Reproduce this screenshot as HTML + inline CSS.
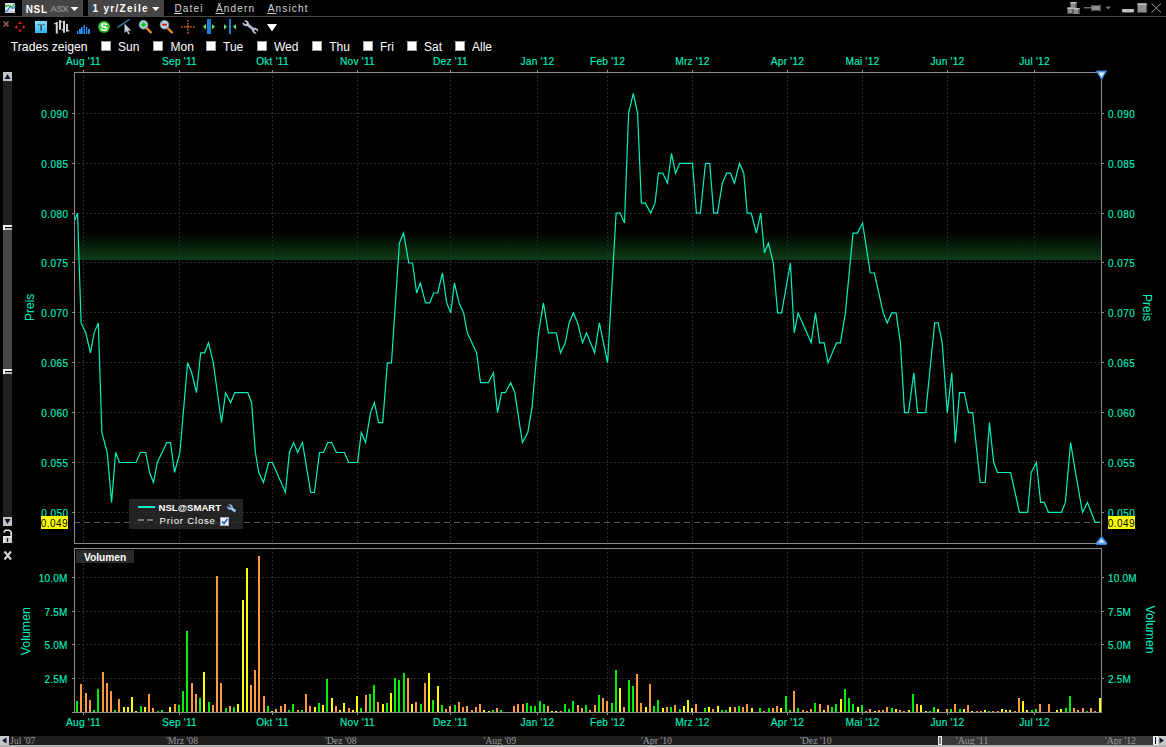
<!DOCTYPE html>
<html><head><meta charset="utf-8"><title>NSL Chart</title>
<style>
html,body{margin:0;padding:0;background:#000;}
body{width:1166px;height:747px;position:relative;overflow:hidden;font-family:"Liberation Sans",sans-serif;}
.a{position:absolute;}
svg text{font-family:"Liberation Sans",sans-serif;}
.tl{fill:#00f0c0;stroke:#00f0c0;stroke-width:0.12px;}
</style></head><body>

<svg class="a" style="left:0;top:0" width="1166" height="747">
<defs><linearGradient id="gb" x1="0" y1="0" x2="0" y2="1"><stop offset="0" stop-color="#000"/><stop offset="1" stop-color="#0f3d15"/></linearGradient>
<clipPath id="cp"><rect x="75" y="73" width="1026" height="470"/></clipPath></defs>
<rect x="0" y="16" width="1166" height="1" fill="#484848"/>
<rect x="22" y="0" width="61" height="16" fill="#454545"/>
<rect x="88" y="0" width="76" height="16" fill="#454545"/>
<text x="25.8" y="12.6" font-size="10" font-weight="bold" fill="#fff" letter-spacing="0.6">NSL</text>
<text x="50.2" y="12.3" font-size="9.4" font-weight="bold" fill="#8c8c8c" letter-spacing="-0.5">ASX</text>
<path d="M70.5 7H78.5L74.5 11z" fill="#fff"/>
<text x="92.5" y="12" font-size="10" font-weight="bold" fill="#fff" letter-spacing="1.3">1 yr/Zeile</text>
<path d="M152 7H159.5L155.75 11z" fill="#fff"/>
<text x="174.5" y="11.8" font-size="10" fill="#d6d6d6" letter-spacing="1.15">Datei</text>
<rect x="174.0" y="13" width="8" height="1" fill="#d6d6d6"/>
<text x="216" y="11.8" font-size="10" fill="#d6d6d6" letter-spacing="1.15">Ändern</text>
<rect x="215.5" y="13" width="9" height="1" fill="#d6d6d6"/>
<text x="267.8" y="11.8" font-size="10" fill="#d6d6d6" letter-spacing="1.15">Ansicht</text>
<rect x="267.3" y="13" width="9" height="1" fill="#d6d6d6"/>
<g transform="translate(5,3)"><rect x="0" y="0" width="10" height="10" fill="#dde2ee"/><rect x="0" y="8" width="10" height="2" fill="#c8ccd8"/>
<path d="M0 8.6 L2.5 7.6 L3.6 6 L4.6 4.5 L5.5 2.6" fill="none" stroke="#2a80e0" stroke-width="1.3"/><circle cx="7.6" cy="5.2" r="0.9" fill="#2a70d0"/><circle cx="9.6" cy="4.5" r="0.9" fill="#2a80e0"/><path d="M0 3.6 L2.5 2.4 L4 2.5 L5.5 4.3 L7.5 3.5 L10 0.3" fill="none" stroke="#22b22a" stroke-width="1.2"/></g>
<g transform="translate(1066,0)">
<g fill="#8a8a8a"><rect x="4.5" y="2" width="6" height="6"/><rect x="1.5" y="7.5" width="6" height="6"/><rect x="7.5" y="8" width="6" height="6"/></g>
<g fill="#c0c0c0"><rect x="4.5" y="2" width="6" height="1.5"/><rect x="1.5" y="7.5" width="6" height="1.5"/><rect x="7.5" y="8" width="6" height="1.5"/></g>
<g fill="#5e5e5e"><rect x="9" y="3.5" width="1.5" height="4.5"/><rect x="6" y="9" width="1.5" height="4.5"/><rect x="12" y="9.5" width="1.5" height="4.5"/></g>
<rect x="18" y="7" width="8" height="1.5" fill="#6a6a6a"/>
<path d="M25.5 4.5 L27 5.5 H33 L34.5 4.5 V11.5 L33 10.5 H27 L25.5 11.5 Z" fill="#8e8e8e"/>
<path d="M39.5 6.5 H45 L42.25 9.5 Z" fill="#7a7a7a"/>
<rect x="56" y="9" width="12" height="3.5" rx="0.8" fill="#bdbdbd"/>
<rect x="71.3" y="3.2" width="9.5" height="9.5" fill="#8e8e8e" stroke="#3c3c3c" stroke-width="0.6"/><rect x="71.6" y="3.5" width="9" height="1.3" fill="#d0d0d0"/>
<path d="M85.5 3.5 L95 12.5 M95 3.5 L85.5 12.5" stroke="#a8a8a8" stroke-width="0.9"/>
</g>
<g transform="translate(0,17)">
<path d="M3.5 4.5 L8.5 9.5 M8.5 4.5 L3.5 9.5" stroke="#8a4f48" stroke-width="1.8"/>
<g fill="#ff1a1a"><path d="M20 4.5 L22 7 H18 Z"/><path d="M20 15.3 L22 12.8 H18 Z"/><path d="M14.7 9.9 L17.2 7.9 V11.9 Z"/><path d="M25.3 9.9 L22.8 7.9 V11.9 Z"/></g>
<defs><linearGradient id="tg" x1="0" y1="0" x2="0" y2="1"><stop offset="0" stop-color="#86dcfb"/><stop offset="1" stop-color="#2fb6ee"/></linearGradient></defs>
<rect x="35" y="4" width="12" height="12" fill="url(#tg)"/>
<rect x="40.3" y="7" width="1.6" height="6.8" fill="#3a4a58"/><rect x="38" y="7" width="1.3" height="1.2" fill="#24405a"/><rect x="43" y="7" width="1.3" height="1.2" fill="#24405a"/><rect x="39.5" y="7" width="3.2" height="0.8" fill="#6f8fa4"/>
<g fill="#cfcfcf"><rect x="55.8" y="5" width="2" height="11.6"/><rect x="54.3" y="5.8" width="1.6" height="1.4"/>
<rect x="59" y="3.1" width="2" height="9.6"/><rect x="61" y="4.2" width="1.4" height="1.3"/>
<rect x="63" y="3.9" width="2" height="11.9"/><rect x="61.8" y="12" width="1.3" height="1.3"/>
<rect x="66" y="6.9" width="2" height="7.8"/><rect x="68" y="13" width="1.3" height="1.3"/></g>
<g fill="#1f8af0"><rect x="77" y="13.9" width="1.4" height="3.1"/><rect x="79" y="12" width="2" height="5"/><rect x="81" y="10" width="1.8" height="7"/><rect x="83.6" y="8.1" width="1.5" height="8.9"/><rect x="86" y="10" width="1.3" height="7"/><rect x="88" y="12" width="2" height="5"/></g>
<circle cx="104" cy="9.9" r="6" fill="#1fa51f"/><circle cx="104" cy="9.4" r="5.2" fill="#38cc38"/>
<text x="104" y="14" font-weight="bold" font-size="11" fill="#fff" text-anchor="middle">S</text>
<path d="M117.5 10.5 L129.5 2.2" stroke="#3a8fd0" stroke-width="1.1"/>
<path d="M124.5 6.5 V16 L126.5 14 L128.5 17.5 L129.8 16.8 L128 13.5 H131 Z" fill="#c8d0dc"/>
<path d="M146.5 11 L151.5 16" stroke="#f0902a" stroke-width="2.4"/><circle cx="143.5" cy="7.7" r="4.3" fill="#bcd6e6" stroke="#7896aa" stroke-width="1"/><path d="M141 7.7 H146 M143.5 5.2 V10.2" stroke="#19c019" stroke-width="2"/>
<path d="M167.5 11 L172.5 16" stroke="#f0902a" stroke-width="2.4"/><circle cx="164.5" cy="7.7" r="4.3" fill="#bcd6e6" stroke="#7896aa" stroke-width="1"/><path d="M162 7.7 H167" stroke="#e02020" stroke-width="2"/>
<g fill="#b8581a"><rect x="187" y="3" width="1.6" height="1.6"/><rect x="187" y="6" width="1.6" height="1.6"/><rect x="187" y="12" width="1.6" height="1.6"/><rect x="187" y="15" width="1.6" height="1.6"/>
<rect x="181" y="9" width="1.6" height="1.6"/><rect x="184" y="9" width="1.6" height="1.6"/><rect x="190" y="9" width="1.6" height="1.6"/><rect x="193" y="9" width="1.6" height="1.6"/><rect x="186.5" y="8.5" width="2.6" height="2.6"/></g>
<rect x="207" y="2" width="4" height="15" fill="#1a7fd0"/><path d="M206 7 L203 9.7 L206 12.5 Z M212 7 L215 9.7 L212 12.5 Z" fill="#5fe35f"/>
<rect x="229" y="2" width="2" height="15" fill="#1a7fd0"/><path d="M224 7 L227 9.7 L224 12.5 Z M236 7 L233 9.7 L236 12.5 Z" fill="#5fe35f"/>
<g transform="translate(250.5,10) rotate(38)"><rect x="-5" y="-1.4" width="10" height="2.8" fill="#aebacb"/><circle cx="-6" cy="0" r="2.9" fill="#c0cada"/><circle cx="6" cy="0" r="2.9" fill="#b4bfd0"/><rect x="-9.5" y="-1" width="4.3" height="2" fill="#000"/><rect x="5.2" y="-1" width="4.3" height="2" fill="#000"/></g>
<path d="M267 7 H277 L272 14.5 Z" fill="#fff"/>
</g>
<text x="10.8" y="51" font-size="12.2" fill="#fff">Trades zeigen</text>
<rect x="101.5" y="41.5" width="9" height="9" fill="#fff" stroke="#a0a0a0"/>
<text x="118" y="51" font-size="12" fill="#fff">Sun</text>
<rect x="153.5" y="41.5" width="9" height="9" fill="#fff" stroke="#a0a0a0"/>
<text x="170.5" y="51" font-size="12" fill="#fff">Mon</text>
<rect x="206.5" y="41.5" width="9" height="9" fill="#fff" stroke="#a0a0a0"/>
<text x="223" y="51" font-size="12" fill="#fff">Tue</text>
<rect x="257.5" y="41.5" width="9" height="9" fill="#fff" stroke="#a0a0a0"/>
<text x="274" y="51" font-size="12" fill="#fff">Wed</text>
<rect x="312.5" y="41.5" width="9" height="9" fill="#fff" stroke="#a0a0a0"/>
<text x="329.2" y="51" font-size="12" fill="#fff">Thu</text>
<rect x="363.5" y="41.5" width="9" height="9" fill="#fff" stroke="#a0a0a0"/>
<text x="380" y="51" font-size="12" fill="#fff">Fri</text>
<rect x="407.5" y="41.5" width="9" height="9" fill="#fff" stroke="#a0a0a0"/>
<text x="424" y="51" font-size="12" fill="#fff">Sat</text>
<rect x="455.5" y="41.5" width="9" height="9" fill="#fff" stroke="#a0a0a0"/>
<text x="472" y="51" font-size="12" fill="#fff">Alle</text>
<rect x="75" y="231" width="1026" height="29" fill="url(#gb)"/>
<path d="M75 113.5H1101" stroke="#2b2b2b" stroke-dasharray="2 2" stroke-dashoffset="1" shape-rendering="crispEdges"/>
<path d="M75 163.5H1101" stroke="#2b2b2b" stroke-dasharray="2 2" stroke-dashoffset="1" shape-rendering="crispEdges"/>
<path d="M75 213.5H1101" stroke="#2b2b2b" stroke-dasharray="2 2" stroke-dashoffset="1" shape-rendering="crispEdges"/>
<path d="M75 262.5H1101" stroke="#2b2b2b" stroke-dasharray="2 2" stroke-dashoffset="1" shape-rendering="crispEdges"/>
<path d="M75 312.5H1101" stroke="#2b2b2b" stroke-dasharray="2 2" stroke-dashoffset="1" shape-rendering="crispEdges"/>
<path d="M75 362.5H1101" stroke="#2b2b2b" stroke-dasharray="2 2" stroke-dashoffset="1" shape-rendering="crispEdges"/>
<path d="M75 412.5H1101" stroke="#2b2b2b" stroke-dasharray="2 2" stroke-dashoffset="1" shape-rendering="crispEdges"/>
<path d="M75 462.5H1101" stroke="#2b2b2b" stroke-dasharray="2 2" stroke-dashoffset="1" shape-rendering="crispEdges"/>
<path d="M75 512.5H1101" stroke="#2b2b2b" stroke-dasharray="2 2" stroke-dashoffset="1" shape-rendering="crispEdges"/>
<path d="M75 577.5H1101" stroke="#2b2b2b" stroke-dasharray="2 2" stroke-dashoffset="1" shape-rendering="crispEdges"/>
<path d="M75 611.5H1101" stroke="#2b2b2b" stroke-dasharray="2 2" stroke-dashoffset="1" shape-rendering="crispEdges"/>
<path d="M75 644.5H1101" stroke="#2b2b2b" stroke-dasharray="2 2" stroke-dashoffset="1" shape-rendering="crispEdges"/>
<path d="M75 678.5H1101" stroke="#2b2b2b" stroke-dasharray="2 2" stroke-dashoffset="1" shape-rendering="crispEdges"/>
<path d="M83.5 73V543M83.5 549V712" stroke="#2b2b2b" stroke-dasharray="2 2" stroke-dashoffset="1" shape-rendering="crispEdges"/>
<path d="M83.5 70V72M83.5 713V715" stroke="#8c8c8c" shape-rendering="crispEdges"/>
<path d="M179.5 73V543M179.5 549V712" stroke="#2b2b2b" stroke-dasharray="2 2" stroke-dashoffset="1" shape-rendering="crispEdges"/>
<path d="M179.5 70V72M179.5 713V715" stroke="#8c8c8c" shape-rendering="crispEdges"/>
<path d="M272.5 73V543M272.5 549V712" stroke="#2b2b2b" stroke-dasharray="2 2" stroke-dashoffset="1" shape-rendering="crispEdges"/>
<path d="M272.5 70V72M272.5 713V715" stroke="#8c8c8c" shape-rendering="crispEdges"/>
<path d="M357.5 73V543M357.5 549V712" stroke="#2b2b2b" stroke-dasharray="2 2" stroke-dashoffset="1" shape-rendering="crispEdges"/>
<path d="M357.5 70V72M357.5 713V715" stroke="#8c8c8c" shape-rendering="crispEdges"/>
<path d="M450.5 73V543M450.5 549V712" stroke="#2b2b2b" stroke-dasharray="2 2" stroke-dashoffset="1" shape-rendering="crispEdges"/>
<path d="M450.5 70V72M450.5 713V715" stroke="#8c8c8c" shape-rendering="crispEdges"/>
<path d="M537.5 73V543M537.5 549V712" stroke="#2b2b2b" stroke-dasharray="2 2" stroke-dashoffset="1" shape-rendering="crispEdges"/>
<path d="M537.5 70V72M537.5 713V715" stroke="#8c8c8c" shape-rendering="crispEdges"/>
<path d="M607.5 73V543M607.5 549V712" stroke="#2b2b2b" stroke-dasharray="2 2" stroke-dashoffset="1" shape-rendering="crispEdges"/>
<path d="M607.5 70V72M607.5 713V715" stroke="#8c8c8c" shape-rendering="crispEdges"/>
<path d="M692.5 73V543M692.5 549V712" stroke="#2b2b2b" stroke-dasharray="2 2" stroke-dashoffset="1" shape-rendering="crispEdges"/>
<path d="M692.5 70V72M692.5 713V715" stroke="#8c8c8c" shape-rendering="crispEdges"/>
<path d="M787.5 73V543M787.5 549V712" stroke="#2b2b2b" stroke-dasharray="2 2" stroke-dashoffset="1" shape-rendering="crispEdges"/>
<path d="M787.5 70V72M787.5 713V715" stroke="#8c8c8c" shape-rendering="crispEdges"/>
<path d="M862.5 73V543M862.5 549V712" stroke="#2b2b2b" stroke-dasharray="2 2" stroke-dashoffset="1" shape-rendering="crispEdges"/>
<path d="M862.5 70V72M862.5 713V715" stroke="#8c8c8c" shape-rendering="crispEdges"/>
<path d="M947.5 73V543M947.5 549V712" stroke="#2b2b2b" stroke-dasharray="2 2" stroke-dashoffset="1" shape-rendering="crispEdges"/>
<path d="M947.5 70V72M947.5 713V715" stroke="#8c8c8c" shape-rendering="crispEdges"/>
<path d="M1034.5 73V543M1034.5 549V712" stroke="#2b2b2b" stroke-dasharray="2 2" stroke-dashoffset="1" shape-rendering="crispEdges"/>
<path d="M1034.5 70V72M1034.5 713V715" stroke="#8c8c8c" shape-rendering="crispEdges"/>
<path d="M72 113.5H74M1102 113.5H1104" stroke="#8c8c8c" shape-rendering="crispEdges"/>
<path d="M72 163.5H74M1102 163.5H1104" stroke="#8c8c8c" shape-rendering="crispEdges"/>
<path d="M72 213.5H74M1102 213.5H1104" stroke="#8c8c8c" shape-rendering="crispEdges"/>
<path d="M72 262.5H74M1102 262.5H1104" stroke="#8c8c8c" shape-rendering="crispEdges"/>
<path d="M72 312.5H74M1102 312.5H1104" stroke="#8c8c8c" shape-rendering="crispEdges"/>
<path d="M72 362.5H74M1102 362.5H1104" stroke="#8c8c8c" shape-rendering="crispEdges"/>
<path d="M72 412.5H74M1102 412.5H1104" stroke="#8c8c8c" shape-rendering="crispEdges"/>
<path d="M72 462.5H74M1102 462.5H1104" stroke="#8c8c8c" shape-rendering="crispEdges"/>
<path d="M72 512.5H74M1102 512.5H1104" stroke="#8c8c8c" shape-rendering="crispEdges"/>
<path d="M72 577.5H74M1102 577.5H1104" stroke="#8c8c8c" shape-rendering="crispEdges"/>
<path d="M72 611.5H74M1102 611.5H1104" stroke="#8c8c8c" shape-rendering="crispEdges"/>
<path d="M72 644.5H74M1102 644.5H1104" stroke="#8c8c8c" shape-rendering="crispEdges"/>
<path d="M72 678.5H74M1102 678.5H1104" stroke="#8c8c8c" shape-rendering="crispEdges"/>
<path d="M75 522.5H1101" stroke="#585858" stroke-dasharray="6 4" stroke-dashoffset="1" shape-rendering="crispEdges"/>
<path d="M74.5 72.5H1101.5V543.5H74.5Z" fill="none" stroke="#8c8c8c" shape-rendering="crispEdges"/>
<path d="M74.5 712.5V548.5H1101.5V712.5" fill="none" stroke="#8c8c8c" shape-rendering="crispEdges"/>
<path d="M72 712.5H1102" stroke="#8c8c8c" shape-rendering="crispEdges"/>
<rect x="76" y="701" width="2" height="11" fill="#00f000"/>
<rect x="80" y="684" width="2" height="28" fill="#ff9a40"/>
<rect x="85" y="693" width="2" height="19" fill="#ff9a40"/>
<rect x="89" y="700" width="2" height="12" fill="#ff9a40"/>
<rect x="93" y="710" width="2" height="2" fill="#00f000"/>
<rect x="97" y="689" width="2" height="23" fill="#00f000"/>
<rect x="102" y="672" width="2" height="40" fill="#ff9a40"/>
<rect x="106" y="683" width="2" height="29" fill="#ff9a40"/>
<rect x="110" y="691" width="2" height="21" fill="#ff9a40"/>
<rect x="114" y="710" width="2" height="2" fill="#00f000"/>
<rect x="118" y="699" width="2" height="13" fill="#ff9a40"/>
<rect x="123" y="707" width="2" height="5" fill="#ffff00"/>
<rect x="127" y="707" width="2" height="5" fill="#ffff00"/>
<rect x="131" y="697" width="2" height="15" fill="#ffff00"/>
<rect x="135" y="711" width="2" height="1" fill="#ffff00"/>
<rect x="140" y="706" width="2" height="6" fill="#00f000"/>
<rect x="144" y="707" width="2" height="5" fill="#ffff00"/>
<rect x="148" y="694" width="2" height="18" fill="#ff9a40"/>
<rect x="152" y="708" width="2" height="4" fill="#ff9a40"/>
<rect x="157" y="711" width="2" height="1" fill="#00f000"/>
<rect x="161" y="710" width="2" height="2" fill="#00f000"/>
<rect x="169" y="707" width="2" height="5" fill="#ffff00"/>
<rect x="174" y="704" width="2" height="8" fill="#ff9a40"/>
<rect x="178" y="705" width="2" height="7" fill="#00f000"/>
<rect x="182" y="691" width="2" height="21" fill="#00f000"/>
<rect x="186" y="631" width="2" height="81" fill="#00f000"/>
<rect x="191" y="683" width="2" height="29" fill="#ff9a40"/>
<rect x="195" y="694" width="2" height="18" fill="#ff9a40"/>
<rect x="199" y="698" width="2" height="14" fill="#00f000"/>
<rect x="203" y="672" width="2" height="40" fill="#ffff00"/>
<rect x="208" y="702" width="2" height="10" fill="#00f000"/>
<rect x="212" y="705" width="2" height="7" fill="#ff9a40"/>
<rect x="216" y="576" width="2" height="136" fill="#ff9a40"/>
<rect x="220" y="683" width="2" height="29" fill="#ff9a40"/>
<rect x="225" y="708" width="2" height="4" fill="#00f000"/>
<rect x="229" y="706" width="2" height="6" fill="#ff9a40"/>
<rect x="233" y="707" width="2" height="5" fill="#00f000"/>
<rect x="237" y="704" width="2" height="8" fill="#ffff00"/>
<rect x="242" y="600" width="2" height="112" fill="#ffff00"/>
<rect x="246" y="568" width="2" height="144" fill="#ffff00"/>
<rect x="250" y="685" width="2" height="27" fill="#ff9a40"/>
<rect x="254" y="670" width="2" height="42" fill="#ff9a40"/>
<rect x="258" y="556" width="2" height="156" fill="#ff9a40"/>
<rect x="263" y="696" width="2" height="16" fill="#ff9a40"/>
<rect x="267" y="706" width="2" height="6" fill="#00f000"/>
<rect x="271" y="711" width="2" height="1" fill="#ffff00"/>
<rect x="275" y="709" width="2" height="3" fill="#ff9a40"/>
<rect x="280" y="706" width="2" height="6" fill="#ff9a40"/>
<rect x="284" y="704" width="2" height="8" fill="#ff9a40"/>
<rect x="288" y="710" width="2" height="2" fill="#00f000"/>
<rect x="292" y="704" width="2" height="8" fill="#00f000"/>
<rect x="297" y="710" width="2" height="2" fill="#ff9a40"/>
<rect x="301" y="710" width="2" height="2" fill="#00f000"/>
<rect x="305" y="694" width="2" height="18" fill="#ff9a40"/>
<rect x="309" y="706" width="2" height="6" fill="#ff9a40"/>
<rect x="314" y="707" width="2" height="5" fill="#ffff00"/>
<rect x="318" y="703" width="2" height="9" fill="#00f000"/>
<rect x="322" y="705" width="2" height="7" fill="#ffff00"/>
<rect x="326" y="679" width="2" height="33" fill="#00f000"/>
<rect x="331" y="698" width="2" height="14" fill="#ffff00"/>
<rect x="335" y="706" width="2" height="6" fill="#ff9a40"/>
<rect x="339" y="710" width="2" height="2" fill="#ffff00"/>
<rect x="343" y="703" width="2" height="9" fill="#ffff00"/>
<rect x="348" y="708" width="2" height="4" fill="#ff9a40"/>
<rect x="352" y="710" width="2" height="2" fill="#ffff00"/>
<rect x="356" y="696" width="2" height="16" fill="#ffff00"/>
<rect x="360" y="708" width="2" height="4" fill="#00f000"/>
<rect x="365" y="695" width="2" height="17" fill="#ff9a40"/>
<rect x="369" y="694" width="2" height="18" fill="#00f000"/>
<rect x="373" y="685" width="2" height="27" fill="#00f000"/>
<rect x="377" y="702" width="2" height="10" fill="#ff9a40"/>
<rect x="382" y="704" width="2" height="8" fill="#ffff00"/>
<rect x="386" y="703" width="2" height="9" fill="#00f000"/>
<rect x="390" y="693" width="2" height="19" fill="#ffff00"/>
<rect x="394" y="678" width="2" height="34" fill="#00f000"/>
<rect x="398" y="680" width="2" height="32" fill="#00f000"/>
<rect x="403" y="673" width="2" height="39" fill="#00f000"/>
<rect x="407" y="678" width="2" height="34" fill="#ff9a40"/>
<rect x="411" y="704" width="2" height="8" fill="#ffff00"/>
<rect x="415" y="702" width="2" height="10" fill="#ff9a40"/>
<rect x="420" y="704" width="2" height="8" fill="#00f000"/>
<rect x="424" y="683" width="2" height="29" fill="#ff9a40"/>
<rect x="428" y="673" width="2" height="39" fill="#ffff00"/>
<rect x="432" y="700" width="2" height="12" fill="#00f000"/>
<rect x="437" y="686" width="2" height="26" fill="#ffff00"/>
<rect x="441" y="705" width="2" height="7" fill="#00f000"/>
<rect x="445" y="709" width="2" height="3" fill="#ff9a40"/>
<rect x="449" y="706" width="2" height="6" fill="#ff9a40"/>
<rect x="454" y="705" width="2" height="7" fill="#00f000"/>
<rect x="458" y="702" width="2" height="10" fill="#ff9a40"/>
<rect x="462" y="707" width="2" height="5" fill="#ff9a40"/>
<rect x="466" y="706" width="2" height="6" fill="#ff9a40"/>
<rect x="471" y="710" width="2" height="2" fill="#ff9a40"/>
<rect x="475" y="707" width="2" height="5" fill="#ff9a40"/>
<rect x="479" y="704" width="2" height="8" fill="#ff9a40"/>
<rect x="483" y="710" width="2" height="2" fill="#ffff00"/>
<rect x="488" y="711" width="2" height="1" fill="#ffff00"/>
<rect x="492" y="710" width="2" height="2" fill="#00f000"/>
<rect x="496" y="708" width="2" height="4" fill="#ff9a40"/>
<rect x="500" y="710" width="2" height="2" fill="#00f000"/>
<rect x="513" y="706" width="2" height="6" fill="#ff9a40"/>
<rect x="517" y="704" width="2" height="8" fill="#ff9a40"/>
<rect x="522" y="704" width="2" height="8" fill="#ff9a40"/>
<rect x="526" y="703" width="2" height="9" fill="#00f000"/>
<rect x="530" y="706" width="2" height="6" fill="#00f000"/>
<rect x="534" y="706" width="2" height="6" fill="#00f000"/>
<rect x="539" y="701" width="2" height="11" fill="#00f000"/>
<rect x="543" y="704" width="2" height="8" fill="#00f000"/>
<rect x="547" y="706" width="2" height="6" fill="#ff9a40"/>
<rect x="551" y="711" width="2" height="1" fill="#ffff00"/>
<rect x="555" y="711" width="2" height="1" fill="#ffff00"/>
<rect x="560" y="711" width="2" height="1" fill="#ff9a40"/>
<rect x="564" y="704" width="2" height="8" fill="#00f000"/>
<rect x="568" y="709" width="2" height="3" fill="#00f000"/>
<rect x="572" y="701" width="2" height="11" fill="#00f000"/>
<rect x="577" y="705" width="2" height="7" fill="#ff9a40"/>
<rect x="581" y="708" width="2" height="4" fill="#ff9a40"/>
<rect x="585" y="705" width="2" height="7" fill="#00f000"/>
<rect x="589" y="710" width="2" height="2" fill="#ff9a40"/>
<rect x="594" y="705" width="2" height="7" fill="#ff9a40"/>
<rect x="598" y="695" width="2" height="17" fill="#00f000"/>
<rect x="602" y="698" width="2" height="14" fill="#ff9a40"/>
<rect x="606" y="701" width="2" height="11" fill="#ff9a40"/>
<rect x="611" y="703" width="2" height="9" fill="#00f000"/>
<rect x="615" y="670" width="2" height="42" fill="#00f000"/>
<rect x="619" y="688" width="2" height="24" fill="#ffff00"/>
<rect x="623" y="707" width="2" height="5" fill="#ff9a40"/>
<rect x="628" y="680" width="2" height="32" fill="#00f000"/>
<rect x="632" y="686" width="2" height="26" fill="#00f000"/>
<rect x="636" y="674" width="2" height="38" fill="#ff9a40"/>
<rect x="640" y="703" width="2" height="9" fill="#ff9a40"/>
<rect x="645" y="707" width="2" height="5" fill="#ffff00"/>
<rect x="649" y="684" width="2" height="28" fill="#ff9a40"/>
<rect x="653" y="706" width="2" height="6" fill="#00f000"/>
<rect x="657" y="700" width="2" height="12" fill="#00f000"/>
<rect x="662" y="708" width="2" height="4" fill="#ffff00"/>
<rect x="666" y="707" width="2" height="5" fill="#ff9a40"/>
<rect x="670" y="707" width="2" height="5" fill="#00f000"/>
<rect x="674" y="705" width="2" height="7" fill="#ff9a40"/>
<rect x="679" y="709" width="2" height="3" fill="#00f000"/>
<rect x="683" y="706" width="2" height="6" fill="#ffff00"/>
<rect x="687" y="700" width="2" height="12" fill="#ffff00"/>
<rect x="691" y="708" width="2" height="4" fill="#ffff00"/>
<rect x="695" y="704" width="2" height="8" fill="#ff9a40"/>
<rect x="704" y="708" width="2" height="4" fill="#00f000"/>
<rect x="708" y="707" width="2" height="5" fill="#ffff00"/>
<rect x="712" y="709" width="2" height="3" fill="#ff9a40"/>
<rect x="717" y="706" width="2" height="6" fill="#ffff00"/>
<rect x="721" y="710" width="2" height="2" fill="#00f000"/>
<rect x="725" y="710" width="2" height="2" fill="#00f000"/>
<rect x="729" y="707" width="2" height="5" fill="#ffff00"/>
<rect x="734" y="707" width="2" height="5" fill="#ff9a40"/>
<rect x="738" y="706" width="2" height="6" fill="#00f000"/>
<rect x="742" y="707" width="2" height="5" fill="#ff9a40"/>
<rect x="746" y="704" width="2" height="8" fill="#ff9a40"/>
<rect x="751" y="708" width="2" height="4" fill="#ffff00"/>
<rect x="759" y="708" width="2" height="4" fill="#00f000"/>
<rect x="763" y="711" width="2" height="1" fill="#ff9a40"/>
<rect x="768" y="708" width="2" height="4" fill="#00f000"/>
<rect x="772" y="708" width="2" height="4" fill="#ff9a40"/>
<rect x="776" y="706" width="2" height="6" fill="#ff9a40"/>
<rect x="780" y="708" width="2" height="4" fill="#ffff00"/>
<rect x="785" y="696" width="2" height="16" fill="#00f000"/>
<rect x="789" y="710" width="2" height="2" fill="#00f000"/>
<rect x="793" y="691" width="2" height="21" fill="#ff9a40"/>
<rect x="797" y="708" width="2" height="4" fill="#00f000"/>
<rect x="802" y="710" width="2" height="2" fill="#ff9a40"/>
<rect x="806" y="711" width="2" height="1" fill="#ff9a40"/>
<rect x="810" y="709" width="2" height="3" fill="#ff9a40"/>
<rect x="814" y="703" width="2" height="9" fill="#00f000"/>
<rect x="819" y="704" width="2" height="8" fill="#ff9a40"/>
<rect x="823" y="710" width="2" height="2" fill="#ffff00"/>
<rect x="827" y="705" width="2" height="7" fill="#ff9a40"/>
<rect x="831" y="707" width="2" height="5" fill="#00f000"/>
<rect x="835" y="704" width="2" height="8" fill="#00f000"/>
<rect x="840" y="699" width="2" height="13" fill="#ffff00"/>
<rect x="844" y="689" width="2" height="23" fill="#00f000"/>
<rect x="848" y="698" width="2" height="14" fill="#00f000"/>
<rect x="852" y="704" width="2" height="8" fill="#00f000"/>
<rect x="857" y="707" width="2" height="5" fill="#ffff00"/>
<rect x="861" y="705" width="2" height="7" fill="#00f000"/>
<rect x="865" y="711" width="2" height="1" fill="#ff9a40"/>
<rect x="869" y="709" width="2" height="3" fill="#ff9a40"/>
<rect x="874" y="711" width="2" height="1" fill="#ffff00"/>
<rect x="878" y="710" width="2" height="2" fill="#ff9a40"/>
<rect x="882" y="710" width="2" height="2" fill="#ff9a40"/>
<rect x="886" y="707" width="2" height="5" fill="#ff9a40"/>
<rect x="891" y="708" width="2" height="4" fill="#00f000"/>
<rect x="895" y="709" width="2" height="3" fill="#ffff00"/>
<rect x="899" y="710" width="2" height="2" fill="#ff9a40"/>
<rect x="903" y="711" width="2" height="1" fill="#ff9a40"/>
<rect x="908" y="710" width="2" height="2" fill="#ffff00"/>
<rect x="912" y="694" width="2" height="18" fill="#00f000"/>
<rect x="916" y="704" width="2" height="8" fill="#ff9a40"/>
<rect x="920" y="705" width="2" height="7" fill="#ffff00"/>
<rect x="925" y="711" width="2" height="1" fill="#ffff00"/>
<rect x="929" y="711" width="2" height="1" fill="#00f000"/>
<rect x="933" y="707" width="2" height="5" fill="#00f000"/>
<rect x="937" y="709" width="2" height="3" fill="#ffff00"/>
<rect x="946" y="709" width="2" height="3" fill="#ff9a40"/>
<rect x="950" y="709" width="2" height="3" fill="#00f000"/>
<rect x="954" y="704" width="2" height="8" fill="#ff9a40"/>
<rect x="959" y="709" width="2" height="3" fill="#00f000"/>
<rect x="963" y="709" width="2" height="3" fill="#ffff00"/>
<rect x="967" y="705" width="2" height="7" fill="#ff9a40"/>
<rect x="971" y="711" width="2" height="1" fill="#ffff00"/>
<rect x="976" y="711" width="2" height="1" fill="#ff9a40"/>
<rect x="980" y="711" width="2" height="1" fill="#ff9a40"/>
<rect x="984" y="710" width="2" height="2" fill="#ffff00"/>
<rect x="988" y="711" width="2" height="1" fill="#00f000"/>
<rect x="992" y="711" width="2" height="1" fill="#ff9a40"/>
<rect x="997" y="711" width="2" height="1" fill="#ff9a40"/>
<rect x="1001" y="709" width="2" height="3" fill="#ffff00"/>
<rect x="1005" y="710" width="2" height="2" fill="#ffff00"/>
<rect x="1009" y="710" width="2" height="2" fill="#ffff00"/>
<rect x="1014" y="711" width="2" height="1" fill="#ff9a40"/>
<rect x="1018" y="698" width="2" height="14" fill="#ff9a40"/>
<rect x="1022" y="701" width="2" height="11" fill="#ffff00"/>
<rect x="1026" y="710" width="2" height="2" fill="#ffff00"/>
<rect x="1031" y="710" width="2" height="2" fill="#00f000"/>
<rect x="1035" y="709" width="2" height="3" fill="#00f000"/>
<rect x="1039" y="704" width="2" height="8" fill="#ff9a40"/>
<rect x="1048" y="704" width="2" height="8" fill="#ff9a40"/>
<rect x="1056" y="710" width="2" height="2" fill="#ffff00"/>
<rect x="1060" y="709" width="2" height="3" fill="#ffff00"/>
<rect x="1065" y="708" width="2" height="4" fill="#00f000"/>
<rect x="1069" y="696" width="2" height="16" fill="#00f000"/>
<rect x="1073" y="708" width="2" height="4" fill="#ff9a40"/>
<rect x="1077" y="710" width="2" height="2" fill="#ff9a40"/>
<rect x="1082" y="708" width="2" height="4" fill="#ff9a40"/>
<rect x="1086" y="711" width="2" height="1" fill="#00f000"/>
<rect x="1090" y="708" width="2" height="4" fill="#ff9a40"/>
<rect x="1094" y="711" width="2" height="1" fill="#ff9a40"/>
<rect x="1099" y="698" width="2" height="14" fill="#ffff00"/>
<polyline points="73.5,223.1 77.5,213.1 81.1,322.9 85.7,332.8 90.5,352.8 94.1,332.8 98.3,322.9 101.9,432.6 107.2,452.5 111.6,502.4 115.6,452.5 119.6,462.5 136.1,462.5 140.4,452.5 145.7,452.5 149.6,472.5 153.5,482.5 157.3,462.5 166.8,442.6 170.5,442.6 174.5,472.5 179.9,452.5 187.6,362.8 191.7,372.8 196.5,392.7 200.7,352.8 204.6,352.8 208.5,342.8 213.3,362.8 221.5,422.6 225.6,392.7 230.6,402.7 234.8,392.7 247.8,392.7 251.6,402.7 255.4,452.5 258.8,472.5 263.5,482.5 268.6,462.5 272.4,462.5 285.4,492.5 289.4,452.5 293.6,442.6 297.6,452.5 302.5,442.6 310.7,492.5 314.4,492.5 319.5,452.5 323.5,452.5 327.8,442.6 331.6,442.6 336.4,452.5 344.4,452.5 348.7,462.5 357.6,462.5 361.3,432.6 365.6,442.6 370.5,412.6 374.4,402.7 378.6,422.6 382.7,422.6 387.4,362.8 391.5,362.8 399.4,243.1 403.6,233.1 408.8,263.0 412.6,263.0 416.6,293.0 420.3,283.0 425.5,302.9 429.7,302.9 433.7,293.0 437.7,293.0 442.5,273.0 446.7,302.9 450.7,312.9 454.4,283.0 459.0,302.9 463.6,312.9 467.3,332.8 476.6,352.8 480.5,382.7 488.3,382.7 493.4,372.8 497.5,412.6 501.6,392.7 505.2,392.7 510.7,382.7 514.8,392.7 522.4,442.6 527.8,432.6 532.0,407.7 538.6,332.8 543.4,302.9 548.4,332.8 556.2,332.8 560.5,352.8 565.3,342.8 569.1,322.9 573.4,312.9 577.6,322.9 582.5,342.8 586.5,332.8 594.6,352.8 599.4,322.9 607.6,362.8 616.1,213.1 620.1,213.1 624.5,223.1 628.6,113.4 633.3,93.4 637.6,113.4 641.4,203.2 645.4,203.2 650.7,213.1 655.0,203.2 658.5,173.2 662.8,173.2 667.5,183.2 671.5,153.3 675.5,173.2 679.7,163.3 692.5,163.3 696.4,213.1 700.4,213.1 705.5,163.3 709.7,163.3 713.7,213.1 717.5,213.1 722.3,183.2 726.6,173.2 730.5,173.2 734.4,183.2 739.5,163.3 743.8,173.2 747.2,213.1 751.2,213.1 756.4,233.1 760.7,213.1 764.4,253.0 768.4,243.1 773.3,263.0 777.6,312.9 781.6,312.9 790.4,263.0 794.2,332.8 798.1,312.9 811.2,342.8 815.5,312.9 819.6,342.8 824.2,342.8 828.1,362.8 836.5,342.8 840.4,342.8 845.4,312.9 853.0,233.1 857.5,233.1 862.6,223.1 870.3,273.0 874.4,273.0 883.2,312.9 887.2,322.9 891.8,312.9 896.1,312.9 900.4,342.8 904.5,412.6 908.5,412.6 913.8,372.8 917.6,412.6 925.7,412.6 934.7,322.9 938.2,322.9 942.2,342.8 947.3,412.6 951.8,372.8 955.3,442.6 959.5,392.7 964.3,392.7 968.5,412.6 972.7,412.6 980.2,482.5 985.3,482.5 989.4,422.6 993.7,462.5 997.5,472.5 1010.6,472.5 1019.5,512.4 1027.7,512.4 1031.2,472.5 1036.4,462.5 1040.6,502.4 1044.3,502.4 1048.5,512.4 1061.4,512.4 1065.4,502.4 1070.6,442.6 1075.5,472.5 1082.5,512.4 1087.4,502.4 1095.2,522.4 1100.0,522.4" fill="none" stroke="#00f0c0" stroke-width="1.2" clip-path="url(#cp)"/>
<text x="83.5" y="65" font-size="10.2" class="tl" text-anchor="middle" letter-spacing="0.2">Aug '11</text>
<text x="83.5" y="726" font-size="10.2" class="tl" text-anchor="middle" letter-spacing="0.2">Aug '11</text>
<text x="179.5" y="65" font-size="10.2" class="tl" text-anchor="middle" letter-spacing="0.2">Sep '11</text>
<text x="179.5" y="726" font-size="10.2" class="tl" text-anchor="middle" letter-spacing="0.2">Sep '11</text>
<text x="272.5" y="65" font-size="10.2" class="tl" text-anchor="middle" letter-spacing="0.2">Okt '11</text>
<text x="272.5" y="726" font-size="10.2" class="tl" text-anchor="middle" letter-spacing="0.2">Okt '11</text>
<text x="357.5" y="65" font-size="10.2" class="tl" text-anchor="middle" letter-spacing="0.2">Nov '11</text>
<text x="357.5" y="726" font-size="10.2" class="tl" text-anchor="middle" letter-spacing="0.2">Nov '11</text>
<text x="450.5" y="65" font-size="10.2" class="tl" text-anchor="middle" letter-spacing="0.2">Dez '11</text>
<text x="450.5" y="726" font-size="10.2" class="tl" text-anchor="middle" letter-spacing="0.2">Dez '11</text>
<text x="537.5" y="65" font-size="10.2" class="tl" text-anchor="middle" letter-spacing="0.2">Jan '12</text>
<text x="537.5" y="726" font-size="10.2" class="tl" text-anchor="middle" letter-spacing="0.2">Jan '12</text>
<text x="607.5" y="65" font-size="10.2" class="tl" text-anchor="middle" letter-spacing="0.2">Feb '12</text>
<text x="607.5" y="726" font-size="10.2" class="tl" text-anchor="middle" letter-spacing="0.2">Feb '12</text>
<text x="692.5" y="65" font-size="10.2" class="tl" text-anchor="middle" letter-spacing="0.2">Mrz '12</text>
<text x="692.5" y="726" font-size="10.2" class="tl" text-anchor="middle" letter-spacing="0.2">Mrz '12</text>
<text x="787.5" y="65" font-size="10.2" class="tl" text-anchor="middle" letter-spacing="0.2">Apr '12</text>
<text x="787.5" y="726" font-size="10.2" class="tl" text-anchor="middle" letter-spacing="0.2">Apr '12</text>
<text x="862.5" y="65" font-size="10.2" class="tl" text-anchor="middle" letter-spacing="0.2">Mai '12</text>
<text x="862.5" y="726" font-size="10.2" class="tl" text-anchor="middle" letter-spacing="0.2">Mai '12</text>
<text x="947.5" y="65" font-size="10.2" class="tl" text-anchor="middle" letter-spacing="0.2">Jun '12</text>
<text x="947.5" y="726" font-size="10.2" class="tl" text-anchor="middle" letter-spacing="0.2">Jun '12</text>
<text x="1034.5" y="65" font-size="10.2" class="tl" text-anchor="middle" letter-spacing="0.2">Jul '12</text>
<text x="1034.5" y="726" font-size="10.2" class="tl" text-anchor="middle" letter-spacing="0.2">Jul '12</text>
<text x="68.5" y="117.5" font-size="10" class="tl" text-anchor="end" letter-spacing="0.45">0.090</text>
<text x="1108" y="117.5" font-size="10" class="tl" letter-spacing="0.45">0.090</text>
<text x="68.5" y="167.5" font-size="10" class="tl" text-anchor="end" letter-spacing="0.45">0.085</text>
<text x="1108" y="167.5" font-size="10" class="tl" letter-spacing="0.45">0.085</text>
<text x="68.5" y="217.5" font-size="10" class="tl" text-anchor="end" letter-spacing="0.45">0.080</text>
<text x="1108" y="217.5" font-size="10" class="tl" letter-spacing="0.45">0.080</text>
<text x="68.5" y="266.5" font-size="10" class="tl" text-anchor="end" letter-spacing="0.45">0.075</text>
<text x="1108" y="266.5" font-size="10" class="tl" letter-spacing="0.45">0.075</text>
<text x="68.5" y="316.5" font-size="10" class="tl" text-anchor="end" letter-spacing="0.45">0.070</text>
<text x="1108" y="316.5" font-size="10" class="tl" letter-spacing="0.45">0.070</text>
<text x="68.5" y="366.5" font-size="10" class="tl" text-anchor="end" letter-spacing="0.45">0.065</text>
<text x="1108" y="366.5" font-size="10" class="tl" letter-spacing="0.45">0.065</text>
<text x="68.5" y="416.5" font-size="10" class="tl" text-anchor="end" letter-spacing="0.45">0.060</text>
<text x="1108" y="416.5" font-size="10" class="tl" letter-spacing="0.45">0.060</text>
<text x="68.5" y="466.5" font-size="10" class="tl" text-anchor="end" letter-spacing="0.45">0.055</text>
<text x="1108" y="466.5" font-size="10" class="tl" letter-spacing="0.45">0.055</text>
<text x="68.5" y="516.5" font-size="10" class="tl" text-anchor="end" letter-spacing="0.45">0.050</text>
<text x="1108" y="516.5" font-size="10" class="tl" letter-spacing="0.45">0.050</text>
<text x="67.5" y="581.5" font-size="10" class="tl" text-anchor="end" letter-spacing="0.2">10.0M</text>
<text x="1108" y="581.5" font-size="10" class="tl" letter-spacing="0.2">10.0M</text>
<text x="67.5" y="615.5" font-size="10" class="tl" text-anchor="end" letter-spacing="0.2">7.5M</text>
<text x="1108" y="615.5" font-size="10" class="tl" letter-spacing="0.2">7.5M</text>
<text x="67.5" y="648.5" font-size="10" class="tl" text-anchor="end" letter-spacing="0.2">5.0M</text>
<text x="1108" y="648.5" font-size="10" class="tl" letter-spacing="0.2">5.0M</text>
<text x="67.5" y="682.5" font-size="10" class="tl" text-anchor="end" letter-spacing="0.2">2.5M</text>
<text x="1108" y="682.5" font-size="10" class="tl" letter-spacing="0.2">2.5M</text>
<rect x="41" y="516" width="27" height="13" fill="#ffff00"/>
<text x="54.5" y="527" font-size="10" fill="#000" text-anchor="middle" letter-spacing="0.45">0.049</text>
<rect x="1108" y="516" width="27" height="13" fill="#ffff00"/>
<text x="1121.5" y="527" font-size="10" fill="#000" text-anchor="middle" letter-spacing="0.45">0.049</text>
<text transform="translate(33.7,321) rotate(-90)" font-size="12" fill="#00f0c0">Preis</text>
<text transform="translate(1143,294) rotate(90)" font-size="12" fill="#00f0c0">Preis</text>
<text transform="translate(30.3,655.3) rotate(-90)" font-size="12.4" fill="#00f0c0">Volumen</text>
<text transform="translate(1146,605.5) rotate(90)" font-size="12.4" fill="#00f0c0">Volumen</text>
<rect x="129" y="499" width="114" height="30" fill="#2c2c2c" fill-opacity="0.8"/>
<rect x="138" y="506" width="17" height="2" fill="#00f0c8"/>
<text x="158.5" y="511" font-size="9.6" font-weight="bold" fill="#fff">NSL@SMART</text>
<rect x="138" y="519" width="6" height="2" fill="#787878"/><rect x="147" y="519" width="6" height="2" fill="#787878"/>
<text x="159.5" y="523.8" font-size="9.6" fill="#fff" letter-spacing="0.8">Prior Close</text>
<g transform="translate(231.9,508.6) rotate(38)"><rect x="-2" y="-1.3" width="6.5" height="2.6" fill="#9ccaf2"/><circle cx="-2.6" cy="0" r="2.7" fill="#86b6e6"/><rect x="-5.8" y="-0.9" width="3.4" height="1.8" fill="#262626"/></g>
<rect x="220.5" y="517.5" width="8" height="8" fill="#eef0ff" stroke="#aab"/><path d="M222 521.5 L224 523.5 L227.5 519" stroke="#1a5fd0" stroke-width="1.6" fill="none"/>
<rect x="76" y="550" width="58" height="13" fill="#2a2a2a"/>
<text x="84" y="560.5" font-size="10.2" font-weight="bold" fill="#fff">Volumen</text>
<path d="M1096.5 71 H1106.5 L1101.5 79.5 Z" fill="#5aa0f0" stroke="#3a80e0" stroke-linejoin="round"/><path d="M1098.5 72.5 H1104.5 L1101.5 77Z" fill="#e0ecff"/>
<path d="M1096.5 544.5 H1106.5 V542.5 L1101.5 536.5 L1096.5 542.5 Z" fill="#5aa0f0" stroke="#3a80e0" stroke-linejoin="round"/><path d="M1098.5 542.5 H1104.5 L1101.5 539Z" fill="#e0ecff"/>
<rect x="3" y="72" width="9" height="9" fill="#c4c4c4"/><path d="M7.5 74 L10.5 79 H4.5Z" fill="#0a1a33"/>
<rect x="3" y="81" width="9" height="436" fill="#202020"/>
<rect x="3" y="230" width="9" height="139" fill="#474747"/>
<rect x="3" y="225" width="9" height="2" fill="#f0f0f0"/><rect x="3" y="227" width="2" height="3" fill="#f0f0f0"/><rect x="5" y="228" width="7" height="2" fill="#bbb"/><rect x="5" y="227" width="7" height="1" fill="#000"/>
<rect x="3" y="369" width="9" height="2" fill="#f0f0f0"/><rect x="3" y="371" width="2" height="3" fill="#f0f0f0"/><rect x="5" y="372" width="7" height="2" fill="#bbb"/><rect x="5" y="371" width="7" height="1" fill="#000"/>
<rect x="3" y="517" width="9" height="9" fill="#c4c4c4"/><path d="M7.5 524 L10.5 519 H4.5Z" fill="#0a1a33"/>
<path d="M3.6 532.6 L5.6 530.2 H9.2 L11.2 532.2 V536.5" stroke="#e6e6e6" stroke-width="1.6" fill="none"/><rect x="3" y="536" width="9" height="7" fill="#d2d2d2"/><rect x="3" y="536" width="9" height="1" fill="#eee"/><rect x="3" y="536" width="1" height="7" fill="#eee"/><rect x="6.9" y="538" width="1.3" height="4" rx="0.6" fill="#111"/>
<path d="M4.5 551.5 L11 559.5 M11 551.5 L4.5 559.5" stroke="#d0d0d0" stroke-width="2.2"/>
<rect x="0" y="736" width="1166" height="9" fill="#1e1e1e"/>
<rect x="0" y="745" width="1166" height="2" fill="#b4b4b4"/>
<rect x="0" y="736" width="9" height="9" fill="#c8c8c8"/><path d="M2 740.5 L6.5 737.5 V743.5Z" fill="#0a1a33"/>
<rect x="938" y="736" width="220" height="9" fill="#383838"/>
<rect x="938" y="736" width="4" height="9" fill="#eee"/><rect x="939.5" y="737" width="1" height="7" fill="#000"/>
<rect x="1153" y="736" width="5" height="9" fill="#eee"/><rect x="1155" y="737" width="1" height="7" fill="#000"/>
<rect x="1158" y="736" width="8" height="9" fill="#c8c8c8"/><path d="M1164 740.5 L1159.5 737.5 V743.5Z" fill="#0a1a33"/>
<text x="10" y="743.5" style="font-family:Liberation Serif,serif" font-size="9.8" fill="#9a9a9a">Jul '07</text>
<text x="166" y="743.5" style="font-family:Liberation Serif,serif" font-size="9.8" fill="#9a9a9a">'Mrz '08</text>
<text x="325" y="743.5" style="font-family:Liberation Serif,serif" font-size="9.8" fill="#9a9a9a">'Dez '08</text>
<text x="483.5" y="743.5" style="font-family:Liberation Serif,serif" font-size="9.8" fill="#9a9a9a">'Aug '09</text>
<text x="641" y="743.5" style="font-family:Liberation Serif,serif" font-size="9.8" fill="#9a9a9a">'Apr '10</text>
<text x="800" y="743.5" style="font-family:Liberation Serif,serif" font-size="9.8" fill="#9a9a9a">'Dez '10</text>
<text x="956" y="743.5" style="font-family:Liberation Serif,serif" font-size="9.8" fill="#9a9a9a">'Aug '11</text>
<text x="1105" y="743.5" style="font-family:Liberation Serif,serif" font-size="9.8" fill="#9a9a9a">'Apr '12</text>
</svg>
</body></html>
